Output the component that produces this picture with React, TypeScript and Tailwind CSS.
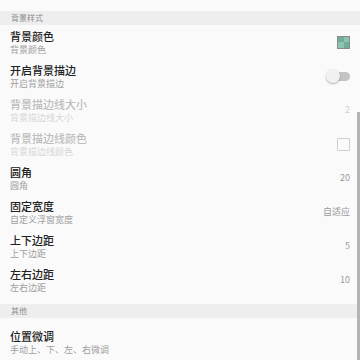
import React from "react";

type Item = {
  title: string;
  sub: string;
  disabled?: boolean;
  right?: React.ReactNode;
  last?: boolean;
};

const font = { fontFamily: '"Noto Sans CJK SC", "Noto Sans", sans-serif' };

const Swatch = () => (
  <div className="w-[13px] h-[13px] border border-[#8a8a8a] grid grid-cols-2 grid-rows-2">
    <div className="bg-[#6fae99]" />
    <div className="bg-[#8cc4b1]" />
    <div className="bg-[#8cc4b1]" />
    <div className="bg-[#6fae99]" />
  </div>
);

const Toggle = () => (
  <div className="relative w-[24px] h-[14px] flex items-center">
    <div className="ml-[7px] w-[17px] h-[9px] rounded-full bg-[#c4c4c4]" />
    <div className="absolute left-0 top-0 w-[14px] h-[14px] rounded-full bg-[#f1f1f1] shadow-[0_1px_2px_rgba(0,0,0,0.3)]" />
  </div>
);

const Checkbox = () => (
  <div className="w-[13px] h-[13px] border-[1.5px] border-[#cfcfcf] rounded-[1px]" />
);

const Value = ({ v, disabled }: { v: string; disabled?: boolean }) => (
  <span className={`text-[9px] leading-[12px] ${disabled ? "text-[#cfcfcf]" : "text-[#9a9a9a]"}`}>{v}</span>
);

const Header = ({ label }: { label: string }) => (
  <div className="h-[14px] bg-[#eeeeee] flex items-center pl-[11px]">
    <span className="text-[8px] leading-[10px] text-[#8c8c8c]">{label}</span>
  </div>
);

const Row = ({ title, sub, disabled, right, last }: Item) => (
  <div className={`flex items-start pl-[10px] pr-[10px] pt-[4px] ${last ? "h-[41px]" : "h-[34px]"}`}>
    <div className="flex-1 flex flex-col">
      <span
        className={`text-[11px] leading-[14px] font-medium ${disabled ? "text-[#bdbdbd]" : "text-[#212121]"}`}
      >
        {title}
      </span>
      <span className={`text-[9px] leading-[14px] ${disabled ? "text-[#d6d6d6]" : "text-[#9e9e9e]"}`}>{sub}</span>
    </div>
    <div className="h-[26px] flex items-center">{right}</div>
  </div>
);

export default function App() {
  const bg: Item[] = [
    { title: "背景颜色", sub: "背景颜色", right: <Swatch /> },
    { title: "开启背景描边", sub: "开启背景描边", right: <Toggle /> },
    { title: "背景描边线大小", sub: "背景描边线大小", disabled: true, right: <Value v="2" disabled /> },
    { title: "背景描边线颜色", sub: "背景描边线颜色", disabled: true, right: <Checkbox /> },
    { title: "圆角", sub: "圆角", right: <Value v="20" /> },
    { title: "固定宽度", sub: "自定义浮窗宽度", right: <Value v="自适应" /> },
    { title: "上下边距", sub: "上下边距", right: <Value v="5" /> },
    { title: "左右边距", sub: "左右边距", right: <Value v="10" />, last: true },
  ];

  return (
    <div className="relative w-[360px] h-[360px] overflow-hidden bg-[#fafafa]" style={font}>
      <div className="h-[11px]" />
      <Header label="背景样式" />
      {bg.map((it) => (
        <Row key={it.title} {...it} />
      ))}
      <Header label="其他" />
      <div className="pl-[10px] pt-[11px] flex flex-col">
        <span className="text-[11px] leading-[14px] font-medium text-[#212121]">位置微调</span>
        <span className="text-[9px] leading-[13px] text-[#9e9e9e]">手动上、下、左、右微调</span>
      </div>
      <div className="absolute right-0 top-[112px] w-[3px] h-[248px] bg-[#b4b4b4]" />
    </div>
  );
}
